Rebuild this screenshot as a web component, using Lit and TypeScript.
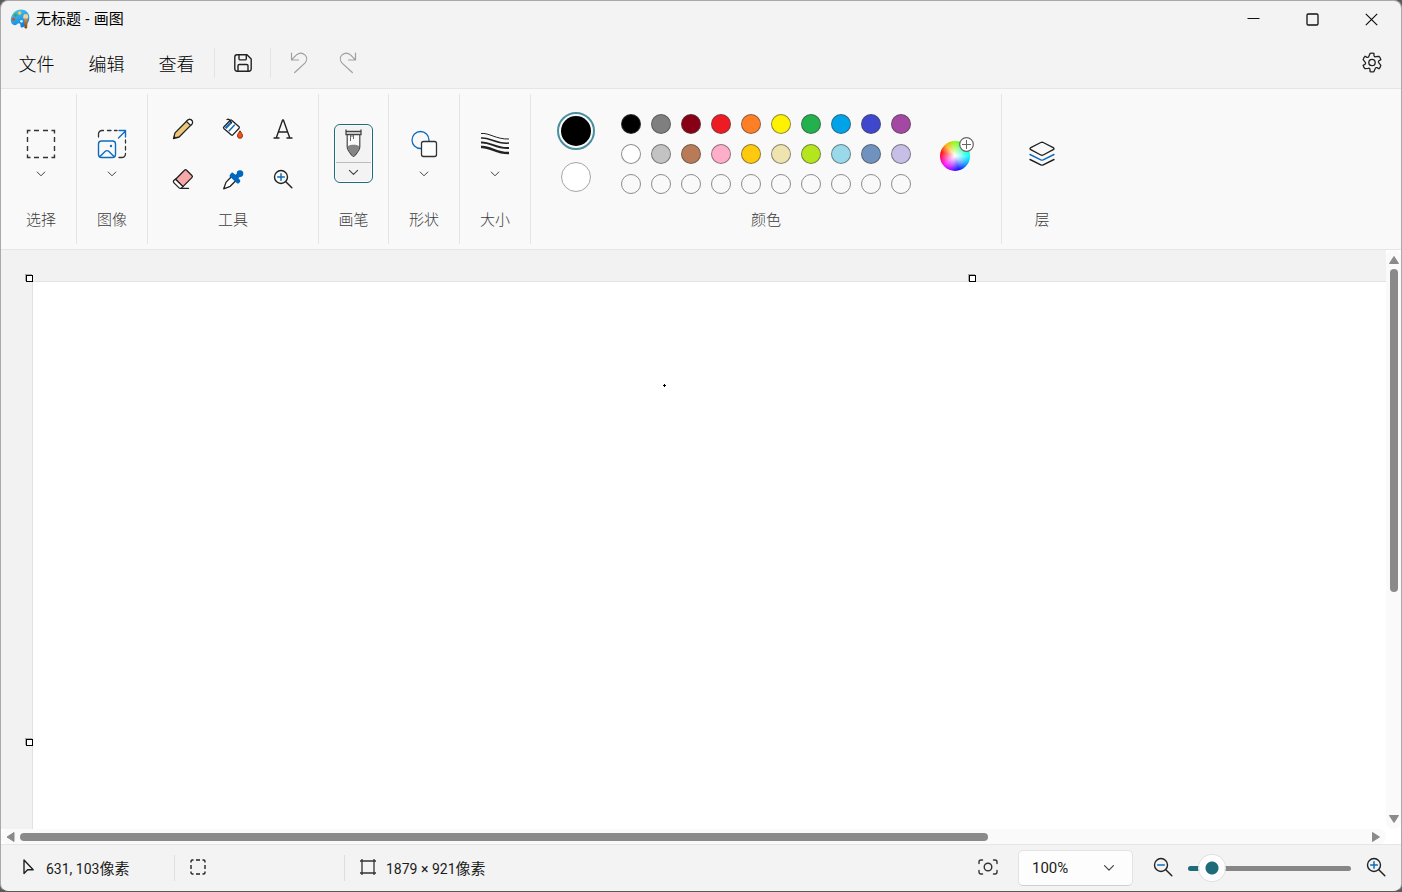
import { LitElement, html, css, svg, nothing } from "lit";
import { customElement, property, state } from "lit/decorators.js";
import { classMap } from "lit/directives/class-map.js";
import { styleMap } from "lit/directives/style-map.js";

const stroke = (d: string, color = "#1f1f1f", w = 1.3) =>
  svg`<path d=${d} fill="none" stroke=${color} stroke-width=${w} stroke-linecap="round" stroke-linejoin="round"/>`;

const chevron = (size = 12) => html`
  <svg width=${size} height=${size} viewBox="0 0 12 12" aria-hidden="true">
    <path d="M2.200 4l3.800 3.800L9.800 4" fill="none" stroke="#3f3f3f" stroke-width="1" stroke-linecap="round" stroke-linejoin="round"/>
  </svg>`;

const icon = (w: number, h: number, body: unknown) => html`
  <svg width=${w} height=${h} viewBox="0 0 ${w} ${h}" aria-hidden="true">${body}</svg>`;

/** Outline of a six-lobed cog centred on (10, 10.5). */
const cog = () => {
  const at = (deg: number, r: number) => {
    const a = (deg * Math.PI) / 180;
    return `${(10 + r * Math.cos(a)).toFixed(2)} ${(10.5 + r * Math.sin(a)).toFixed(2)}`;
  };
  let d = "";
  for (let k = 0; k < 6; k++) {
    const t = -90 + k * 60;
    d += `${k ? "L" : "M"}${at(t - 12, 9.3)}Q${at(t, 9.7)} ${at(t + 12, 9.3)}L${at(t + 16, 7.2)}Q${at(t + 24, 5.9)} ${at(t + 33, 6.9)}`;
  }
  return d + "z";
};

const icons = {
  logo: icon(20, 20, svg`
    <defs>
      <linearGradient id="pal" x1="0" y1="0" x2="0.5" y2="1">
        <stop offset="0" stop-color="#4fd0f5"/><stop offset="1" stop-color="#0f7fdc"/>
      </linearGradient>
      <linearGradient id="brush" x1="0" y1="0" x2="0" y2="1">
        <stop offset="0" stop-color="#d0954f"/><stop offset="1" stop-color="#7d4310"/>
      </linearGradient>
    </defs>
    <path d="M11 .6c4.700 0 8.300 3.300 8.300 7.900 0 4-2.300 7.600-5.800 9.600-1.500.9-3 .3-3-1.200 0-1.400-.5-2.600-1.700-2.600-1.500 0-1.800 1.800-3.700 1.900-2.600.1-4.300-1.900-4.300-4.900C.8 5.200 5.500.6 11 .6z" fill="url(#pal)"/>
    <circle cx="11.500" cy="12.300" r="1.300" fill="#d9f3ff"/>
    <path d="M9.700 2.300v3.400M8 4h3.400" stroke="#ffd23a" stroke-width="1.500"/>
    <path d="M5.500 4.500v3.400M3.800 6.200h3.400" stroke="#3fa648" stroke-width="1.500"/>
    <path d="M3.500 8.600V12M1.800 10.300h3.400" stroke="#d9483b" stroke-width="1.500"/>
    <path d="M14 9.500h3.600l-.4 9c-.1 1.300-2.600 1.300-2.800 0z" fill="url(#brush)"/>
    <path d="M13.300 9.500c-.4-2 .4-3.500 1-4.400.9.600 2 .5 2.900 0 .9 1.200 1.300 2.600.9 4.400z" fill="#efd4a2"/>`),
  save: icon(18, 18, svg`
    ${stroke("M3 .8h10L17.200 4.900V15a2.200 2.200 0 0 1-2.200 2.200H3A2.200 2.200 0 0 1 .8 15V3A2.200 2.200 0 0 1 3 .8z", "#222", 1.400)}
    ${stroke("M5 1v3.700A1.200 1.200 0 0 0 6.200 5.900h4.900a1.200 1.200 0 0 0 1.200-1.200V1M4 17v-5.200A1.300 1.300 0 0 1 5.300 10.500h7.400a1.300 1.300 0 0 1 1.300 1.300V17", "#222", 1.400)}`),
  undo: icon(20, 22, stroke("M2.500 1v7h7M2.800 7.600l4.700-4.700c2.600-2.300 6-2.200 8.400 0 2.300 2.300 2.300 5.800 0 8.200L5.700 20.500", "#9f9f9f", 1.200)),
  redo: icon(20, 22, stroke("M17.500 1v7h-7M17.200 7.600l-4.700-4.700c-2.600-2.300-6-2.200-8.400 0-2.300 2.300-2.300 5.800 0 8.200l10.200 9.400", "#9f9f9f", 1.200)),
  gear: icon(20, 21, svg`
    ${stroke(cog(), "#222", 1.300)}
    <circle cx="10" cy="10.500" r="3.200" fill="none" stroke="#222" stroke-width="1.300"/>`),
  select: icon(30, 30, svg`
    <path d="M1.500 4.500v-3h3M8 1.500h5M17 1.500h5M25.500 1.500h3v3M28.500 8v5M28.500 17v5M28.500 25.500v3h-3M22 28.500h-5M13 28.500h-5M4.500 28.500h-3v-3M1.500 22v-5M1.500 13v-5" fill="none" stroke="#333" stroke-width="1.400"/>`),
  image: icon(30, 30, svg`
    ${stroke("M1.500 8V5a3.500 3.500 0 0 1 3.500-3.500h1.500M10.500 1.500h3.500M17.500 1.500h2.500M28.500 11v3M28.500 17.500v3.500M28.500 24.500v.5a3.500 3.500 0 0 1-3.500 3.500h-3", "#333", 1.300)}
    ${stroke("M21.500 9l7-7M22 1.500h6.500V8", "#0f6cbd", 1.400)}
    <rect x="1.500" y="12" width="17" height="16.500" rx="3" fill="none" stroke="#0f6cbd" stroke-width="1.400"/>
    ${stroke("M3 27.500l5.300-5.200a2.400 2.400 0 0 1 3.400 0l5.300 5.200", "#0f6cbd", 1.400)}
    <circle cx="14" cy="17" r="1.200" fill="#0f6cbd"/>`),
  pencil: icon(22, 22, svg`
    <path d="M1.500 20.500l1.500-5.600L15.600 2.300a2.800 2.800 0 0 1 4.100 4.100L7.100 19z" fill="#efc877" stroke="#222" stroke-width="1.300" stroke-linejoin="round"/>
    <path d="M14.500 3.400l1.100-1.100a2.800 2.800 0 0 1 4.100 4.100l-1.100 1.100z" fill="#fff" stroke="#222" stroke-width="1.200"/>
    <path d="M1.500 20.500l.7-2.700 2 2z" fill="#222"/>`),
  fill: icon(22, 22, svg`
    <path d="M9.700 2.200l7.300 6.600a1 1 0 0 1 .1 1.400l-6.300 6.700a1 1 0 0 1-1.400.1L1.800 10.400a1 1 0 0 1 0-1.400l6.500-6.800a1 1 0 0 1 1.400 0z" fill="#fff" stroke="#222" stroke-width="1.300" stroke-linejoin="round"/>
    <path d="M2.700 9.500l6-6.300 1.700 1.500-6 6.400zM6.200 12.700l6-6.400 1.100 1-6 6.400z" fill="#0f6cbd"/>
    ${stroke("M5 1.500c1.500-.6 2.500 0 3.300 1.300l1.200 2", "#222", 1.300)}
    <path d="M18 12.800c1.600 2.300 2.500 3.700 2.500 5a2.500 2.500 0 0 1-5 0c0-1.300.9-2.700 2.500-5z" fill="#f4511e" stroke="#8d2d0c" stroke-width="1"/>`),
  text: icon(22, 22, stroke("M2 20h5M15 20h5M4.300 19.800L10.600 2h.8l6.300 17.800M6.500 14h9", "#222", 1.400)),
  eraser: icon(22, 22, svg`
    <path d="M12.500 2.200a1.500 1.500 0 0 1 2.100 0l5.300 5.300a1.500 1.500 0 0 1 0 2.100l-9 9-7.300-7.400z" fill="#f7a8a8" stroke="#222" stroke-width="1.300"/>
    <path d="M3.600 11.200l7.300 7.400-1 1a2.200 2.200 0 0 1-3.100 0L2 14.900a1.900 1.900 0 0 1 0-2.700z" fill="#fff" stroke="#222" stroke-width="1.300"/>
    ${stroke("M9 20.400h7.500", "#222", 1.300)}`),
  picker: icon(22, 22, svg`
    <path d="M10.300 7.800l4.200 4.200-6.300 6.300-6.500 2.500 2.400-6.700z" fill="#fff" stroke="#222" stroke-width="1.300" stroke-linejoin="round"/>
    <path d="M9 5.300a1.700 1.700 0 0 1 2.500 0l1.900 1.500 1.300-1.100a3.300 3.300 0 1 1 3 3.200l-1.300 1.400 1.400 1.500a1.700 1.700 0 0 1 0 2.400l-1 1c-.5.5-1.300.5-1.800 0L8 8.800c-.6-.5-.6-1.300-.1-1.900z" fill="#0067c0"/>`),
  zoomIn: icon(22, 22, svg`
    <circle cx="9" cy="9" r="6.500" fill="none" stroke="#222" stroke-width="1.400"/>
    ${stroke("M13.800 13.800l6 5.900", "#222", 1.500)}${stroke("M9 5.700v6.600M5.700 9h6.600", "#0f6cbd", 1.500)}`),
  zoomOut: icon(22, 22, svg`
    <circle cx="9" cy="9" r="6.500" fill="none" stroke="#222" stroke-width="1.400"/>
    ${stroke("M13.800 13.800l6 5.900", "#222", 1.500)}${stroke("M5.700 9h6.600", "#0f6cbd", 1.500)}`),
  brush: icon(17, 30, svg`
    <path d="M2.200 6.500h12.600v12c0 4-3.100 6.300-5 9-.8 1.100-1.800 1.100-2.600 0-1.900-2.700-5-5-5-9z" fill="#fafafa" stroke="#444" stroke-width="1.200"/>
    <path d="M2.700 18.200c3-1.800 8.600-1.800 11.600 0 .3 3.800-3 6.300-4.600 9-.7.9-1.700.9-2.400 0-1.600-2.700-4.900-5.200-4.600-9z" fill="#858585"/>
    <path d="M1 1.500v5h15v-5M1 3.500h15" fill="none" stroke="#444" stroke-width="1.300"/>
    <path d="M5.500 7v6M8.500 7v4M7 7v2" fill="none" stroke="#666" stroke-width="1"/>`),
  shapes: icon(30, 30, svg`
    <circle cx="11.500" cy="11" r="8.500" fill="none" stroke="#0f6cbd" stroke-width="1.300"/>
    <rect x="12.500" y="12.500" width="15" height="15" rx="2" fill="#fdfdfd" stroke="#333" stroke-width="1.300"/>`),
  size: icon(30, 26, svg`
    <g fill="none" stroke="#222">
      <path d="M1 2.500c8-1 15 6 28 5.500" stroke-width="1"/>
      <path d="M1 7c9-1 15 6.500 28 5" stroke-width="1.500"/>
      <path d="M1 11.500c9-1 15 6.500 28 5.500" stroke-width="2"/>
      <path d="M1 16c9-1 15 6.500 28 6" stroke-width="2.500"/>
    </g>`),
  layers: icon(28, 28, svg`
    ${stroke("M12.800 2.500a2.500 2.500 0 0 1 2.400 0l10 5.200c1 .5 1 1.500 0 2l-10 5.300a2.500 2.500 0 0 1-2.400 0l-10-5.300c-1-.5-1-1.500 0-2z", "#222", 1.400)}
    ${stroke("M2 14.500l10.800 5.300a2.500 2.500 0 0 0 2.400 0L26 14.500", "#0f6cbd", 1.400)}
    ${stroke("M2 19.500l10.800 5.300a2.500 2.500 0 0 0 2.400 0L26 19.500", "#222", 1.400)}`),
  cursor: icon(16, 18, stroke("M4 2v13.500l3.600-3.800h5.600z", "#222", 1.400)),
  marquee: icon(16, 16, svg`
    <path d="M1 3.500v-1A1.500 1.500 0 0 1 2.500 1h1M12.500 1h1A1.500 1.500 0 0 1 15 2.500v1M15 12.500v1a1.500 1.500 0 0 1-1.500 1.500h-1M3.500 15h-1A1.500 1.500 0 0 1 1 13.500v-1M6 1h4M6 15h4M1 6v4M15 6v4" fill="none" stroke="#222" stroke-width="1.400"/>`),
  canvasSize: icon(16, 16, svg`
    <path d="M2 0v16M14 0v16M0 2h16M0 14h16" fill="none" stroke="#333" stroke-width="1.300"/>`),
  fit: icon(20, 18, svg`
    <circle cx="10" cy="9" r="3.800" fill="none" stroke="#333" stroke-width="1.400"/>
    ${stroke("M1 5.500v-1.500A2 2 0 0 1 3 2h1.500M15.500 2H17a2 2 0 0 1 2 2v1.500M19 12.500v1.500a2 2 0 0 1-2 2h-1.500M4.500 16H3a2 2 0 0 1-2-2v-1.500", "#333", 1.400)}`),
  minimize: icon(13, 12, svg`<path d="M.5 5.500h12" stroke="#111" stroke-width="1"/>`),
  maximize: icon(13, 13, svg`<rect x="1" y="1" width="11" height="11" rx="1.200" fill="none" stroke="#111" stroke-width="1.300"/>`),
  close: icon(13, 13, svg`<path d="M.8.8l11.400 11.400M12.200.8L.8 12.200" stroke="#111" stroke-width="1.200"/>`),
};

const PALETTE: (string | null)[] = [
  "#000000", "#7f7f7f", "#880015", "#ed1c24", "#ff7f27", "#fff200", "#22b14c", "#00a2e8", "#3f48cc", "#a349a4",
  "#ffffff", "#c3c3c3", "#b97a57", "#ffaec9", "#ffc90e", "#efe4b0", "#b5e61d", "#99d9ea", "#7092be", "#c8bfe7",
  ...Array(10).fill(null),
];

const baseStyles = css`
  * { box-sizing: border-box; }
  button {
    appearance: none; border: 0; background: none; padding: 0; margin: 0;
    font: inherit; color: inherit; display: flex; align-items: center; justify-content: center;
  }
  svg { display: block; flex: none; }
`;

@customElement("ribbon-group")
class RibbonGroup extends LitElement {
  @property() label = "";
  static styles = [baseStyles, css`
    :host {
      display: flex; flex-direction: column; box-sizing: border-box;
      border-right: 1px solid #e5e5e5;
    }
    :host([last]) { border-right: 0; }
    .body { flex: 1; display: flex; justify-content: center; align-items: flex-start; }
    .label { height: 24px; line-height: 24px; margin-bottom: 12px; text-align: center; color: #3c3c3c; font-size: 15px; font-weight: 300; }
  `];
  render() {
    return html`<div class="body"><slot></slot></div><div class="label">${this.label}</div>`;
  }
}

@customElement("app-root")
class AppRoot extends LitElement {
  @state() primary = "#000000";
  @state() zoom = 8;

  static styles = [baseStyles, css`
    :host {
      display: block; height: 100vh; background: #5a5a5a;
      font-family: Roboto, "Noto Sans CJK SC", sans-serif; font-size: 15px; color: #1b1b1b;
    }
    .window {
      height: 100%; display: flex; flex-direction: column; overflow: hidden;
      border: 1px solid #a9a9a9; border-bottom-color: #5a5a5a; border-radius: 8px; background: #f3f3f3;
    }
    .titlebar { display: flex; align-items: center; height: 36px; padding-left: 9px; }
    .title {
      font-family: "Noto Sans", "Noto Sans CJK SC", sans-serif; font-size: 15px; line-height: 20px;
      margin: 0 auto 0 6px; padding-bottom: 2px; font-weight: 400; color: #000;
    }
    .caption { width: 59px; height: 36px; }
    .menubar {
      display: flex; align-items: center; height: 52px; border-bottom: 1px solid #e5e5e5;
    }
    .menu { width: 70px; height: 40px; font-size: 18px; line-height: 24px; font-weight: 300; color: #000; padding: 4px 0 0 1px; }
    .menus { display: flex; padding: 0 3px 0 0; }
    .quick { display: flex; align-items: center; justify-content: center; height: 30px; width: 56px; border-left: 1px solid #e3e3e3; }
    .history { height: 30px; display: flex; align-items: center; border-left: 1px solid #e3e3e3; padding-left: 3px; }
    .history button { width: 49px; height: 30px; }
    .settings { margin-left: auto; width: 40px; height: 40px; margin-right: 9px; }

    .ribbon {
      display: flex; height: 161px; flex: none; padding: 5px 0; background: #f9f9f9; border-bottom: 1px solid #e5e5e5;
    }
    .g-select { width: 76px; padding-left: 5px; }
    .g-std { width: 71px; }
    .g-brush { width: 70px; }
    .g-tools { width: 171px; }
    .g-colors { width: 471px; }
    .g-layers { width: 80px; }
    .drop { flex-direction: column; gap: 9px; height: 60px; margin-top: 30px; width: 40px; }
    .drop .glyph { height: 30px; display: flex; align-items: center; }
    .tools { display: grid; grid-template-columns: repeat(3, 50px); grid-auto-rows: 50px; margin-top: 10px; }
    .brush {
      flex-direction: column; width: 39px; height: 59px; margin-top: 30px;
      border: 1px solid #1e6c7a; border-radius: 6px; background: #f3f3f3; box-shadow: inset 0 0 0 1px #fff;
    }
    .brush .top { height: 38px; width: 35px; display: flex; justify-content: center; padding-top: 3px; border-bottom: 1px solid #bdbdbd; }
    .brush .bottom { flex: 1; display: flex; align-items: center; }
    .colors { flex: 1; display: flex; align-items: flex-start; padding-left: 26px; }
    .wells { display: flex; flex-direction: column; align-items: center; gap: 12px; width: 38px; margin-top: 18px; }
    .well { width: 30px; height: 30px; border-radius: 50%; border: 1px solid #a5a5a5; }
    .well.active { width: 38px; height: 38px; border: 2px solid #4a8f9d; background-clip: content-box; padding: 2px; }
    .palette { display: grid; grid-template-columns: repeat(10, 30px); grid-auto-rows: 30px; margin: 15px 0 0 21px; }
    .swatch { width: 20px; height: 20px; border-radius: 50%; border: 1px solid rgba(70, 70, 70, .6); }
    .cell { display: flex; align-items: center; justify-content: center; }
    .wheel { position: relative; width: 34px; height: 34px; margin: 43px 0 0 24px; }
    .disc {
      position: absolute; left: 0; bottom: 0; width: 30px; height: 30px; border-radius: 50%;
      background: radial-gradient(closest-side, #fff, rgba(255, 255, 255, 0)),
        conic-gradient(from 0deg, #8f0, #0f8 45deg, #0ff 90deg, #08f 130deg, #00f 165deg, #a0f 200deg, #f0f 230deg, #f00 285deg, #fa0 320deg, #8f0);
    }
    .plus { position: absolute; right: 0; top: 0; }
    .layers { width: 40px; height: 40px; margin-top: 40px; }

    .work { flex: 1; min-height: 0; display: grid; grid-template-columns: 1fr 15px; grid-template-rows: 1fr 15px; background: #fff; }
    .viewport { position: relative; overflow: hidden; background: #f2f2f2; padding: 31px 0 0 31px; }
    .paper { height: 100%; background: #fff; border: 1px solid #e2e2e2; border-width: 1px 0 0 1px; position: relative; }
    .handle { position: absolute; width: 7px; height: 7px; border: 1px solid #000; background: #fff; box-shadow: -1px -1px 0 #a8a8a8; }
    .handle.nw { left: 25px; top: 25px; }
    .handle.n { left: 968px; top: 25px; }
    .handle.w { left: 25px; top: 489px; }
    .pixel { position: absolute; left: 630px; top: 102px; width: 3px; height: 3px; }
    .vbar { display: flex; flex-direction: column; align-items: center; background: #fafafa; padding: 4px 0; border-radius: 7px; }
    .vtrack { flex: 1; margin: 3px 0 2px; width: 8px; }
    .vthumb { height: 59.6%; width: 8px; border-radius: 4px; background: #8a8a8a; }
    .hbar { display: flex; align-items: center; background: #fafafa; padding: 0 4px; border-radius: 7px; }
    .htrack { flex: 1; margin: 0 3px; height: 8px; }
    .hthumb { width: 71.9%; height: 8px; border-radius: 4px; background: #8a8a8a; }

    .status { display: flex; align-items: center; flex: none; height: 47px; border-top: 1px solid #e5e5e5; font-size: 14px; }
    .cell-status { display: flex; align-items: center; height: 26px; gap: 10px; border-right: 1px solid #dedede; padding: 0 0 2px 19px; }
    .cell-status .zh { font-size: 15px; }
    .c1 { width: 174px; }
    .c2 { width: 170px; padding-left: 15px; }
    .c3 { border-right: 0; padding-left: 15px; margin-right: auto; }
    .fit { width: 40px; height: 36px; margin-right: 10px; padding-bottom: 2px; }
    .scale { position: relative; width: 115px; height: 36px; }
    .scale select {
      appearance: none; width: 100%; height: 100%; border: 1px solid #e2e2e2; border-bottom-color: #cfcfcf; border-radius: 5px;
      background: #fdfdfd; font: inherit; font-size: 15px; color: #1b1b1b; padding: 0 13px;
    }
    .scale svg { position: absolute; right: 17px; top: 11px; pointer-events: none; }
    .zoombtn { width: 30px; height: 36px; padding-bottom: 2px; }
    .out { margin-left: 15px; }
    .in { margin: 0 10px; }
    .slider { appearance: none; width: 163px; height: 28px; margin: 0 0 0 10px; background: none; }
    .slider::-webkit-slider-runnable-track {
      height: 5px; border-radius: 3px; background: linear-gradient(90deg, #1e6c7a 15%, #868686 15%);
    }
    .slider::-webkit-slider-thumb {
      appearance: none; width: 26px; height: 26px; margin-top: -11px; border-radius: 50%;
      background: radial-gradient(circle, #1e6c7a 6px, #fff 7px); box-shadow: 0 0 0 1px #e0e0e0;
    }
  `];

  private dropButton(label: string, glyph: unknown) {
    return html`<button class="drop" aria-label=${label}><span class="glyph">${glyph}</span>${chevron()}</button>`;
  }

  private arrow(d: string) {
    return html`<svg width="12" height="12" viewBox="0 0 12 12" aria-hidden="true"><path d=${d} fill="#8a8a8a" stroke="#8a8a8a" stroke-linejoin="round"/></svg>`;
  }

  render() {
    return html`
      <div class="window">
        <header class="titlebar">
          ${icons.logo}
          <h1 class="title">无标题 - 画图</h1>
          <button class="caption" aria-label="最小化">${icons.minimize}</button>
          <button class="caption" aria-label="最大化">${icons.maximize}</button>
          <button class="caption" aria-label="关闭">${icons.close}</button>
        </header>

        <nav class="menubar">
          <div class="menus">
            ${["文件", "编辑", "查看"].map((m) => html`<button class="menu">${m}</button>`)}
          </div>
          <button class="quick" aria-label="保存">${icons.save}</button>
          <div class="history">
            <button aria-label="撤消">${icons.undo}</button>
            <button aria-label="重做">${icons.redo}</button>
          </div>
          <button class="settings" aria-label="设置">${icons.gear}</button>
        </nav>

        <section class="ribbon">
          <ribbon-group class="g-select" label="选择">${this.dropButton("选择", icons.select)}</ribbon-group>
          <ribbon-group class="g-std" label="图像">${this.dropButton("图像", icons.image)}</ribbon-group>
          <ribbon-group class="g-tools" label="工具">
            <div class="tools">
              <button aria-label="铅笔">${icons.pencil}</button>
              <button aria-label="填充">${icons.fill}</button>
              <button aria-label="文本">${icons.text}</button>
              <button aria-label="橡皮擦">${icons.eraser}</button>
              <button aria-label="颜色选取器">${icons.picker}</button>
              <button aria-label="放大镜">${icons.zoomIn}</button>
            </div>
          </ribbon-group>
          <ribbon-group class="g-brush" label="画笔">
            <button class="brush" aria-label="画笔">
              <span class="top">${icons.brush}</span><span class="bottom">${chevron(13)}</span>
            </button>
          </ribbon-group>
          <ribbon-group class="g-std" label="形状">${this.dropButton("形状", icons.shapes)}</ribbon-group>
          <ribbon-group class="g-std" label="大小">${this.dropButton("大小", icons.size)}</ribbon-group>
          <ribbon-group class="g-colors" label="颜色">
            <div class="colors">
              <div class="wells">
                <button class="well active" aria-label="颜色 1" style=${styleMap({ backgroundColor: this.primary })}></button>
                <button class="well" aria-label="颜色 2" style=${styleMap({ backgroundColor: "#ffffff" })}></button>
              </div>
              <div class="palette">
                ${PALETTE.map((c) => html`
                  <div class="cell">
                    <button class="swatch" aria-label=${c ?? "空"}
                      style=${c ? styleMap({ backgroundColor: c }) : nothing}
                      @click=${() => { if (c) this.primary = c; }}></button>
                  </div>`)}
              </div>
              <button class="wheel" aria-label="编辑颜色">
                <span class="disc"></span>
                <svg class="plus" width="15" height="15" viewBox="0 0 15 15" aria-hidden="true">
                  <circle cx="7.500" cy="7.500" r="6.800" fill="#fff" stroke="#666" stroke-width="1.200"/>
                  <path d="M7.500 3v9M3 7.500h9" stroke="#666" stroke-width="1"/>
                </svg>
              </button>
            </div>
          </ribbon-group>
          <ribbon-group class="g-layers" label="层" last>
            <button class="layers" aria-label="层">${icons.layers}</button>
          </ribbon-group>
        </section>

        <main class="work">
          <div class="viewport">
            <div class="paper">
              <svg class="pixel" viewBox="0 0 3 3" aria-hidden="true"><path d="M1 0h1v1h1v1H2v1H1V2H0V1h1z" fill="#000"/></svg>
            </div>
            ${["nw", "n", "w"].map((p) => html`<span class=${classMap({ handle: true, [p]: true })}></span>`)}
          </div>
          <div class="vbar">
            ${this.arrow("M6 2.500l4.500 7h-9z")}
            <div class="vtrack"><div class="vthumb"></div></div>
            ${this.arrow("M6 9.500l4.500-7h-9z")}
          </div>
          <div class="hbar">
            ${this.arrow("M2 6l7-4.500v9z")}
            <div class="htrack"><div class="hthumb"></div></div>
            ${this.arrow("M9.500 6l-7-4.500v9z")}
          </div>
        </main>

        <footer class="status">
          <div class="cell-status c1">${icons.cursor}<span>631, 103<span class="zh">像素</span></span></div>
          <div class="cell-status c2">${icons.marquee}</div>
          <div class="cell-status c3">${icons.canvasSize}<span>1879 × 921<span class="zh">像素</span></span></div>
          <button class="fit" aria-label="适应窗口">${icons.fit}</button>
          <div class="scale">
            <select aria-label="缩放"><option>100%</option></select>
            ${chevron(14)}
          </div>
          <button class="zoombtn out" aria-label="缩小">${icons.zoomOut}</button>
          <input class="slider" type="range" min="0" max="100" aria-label="缩放" .value=${String(this.zoom)} />
          <button class="zoombtn in" aria-label="放大">${icons.zoomIn}</button>
        </footer>
      </div>`;
  }
}
